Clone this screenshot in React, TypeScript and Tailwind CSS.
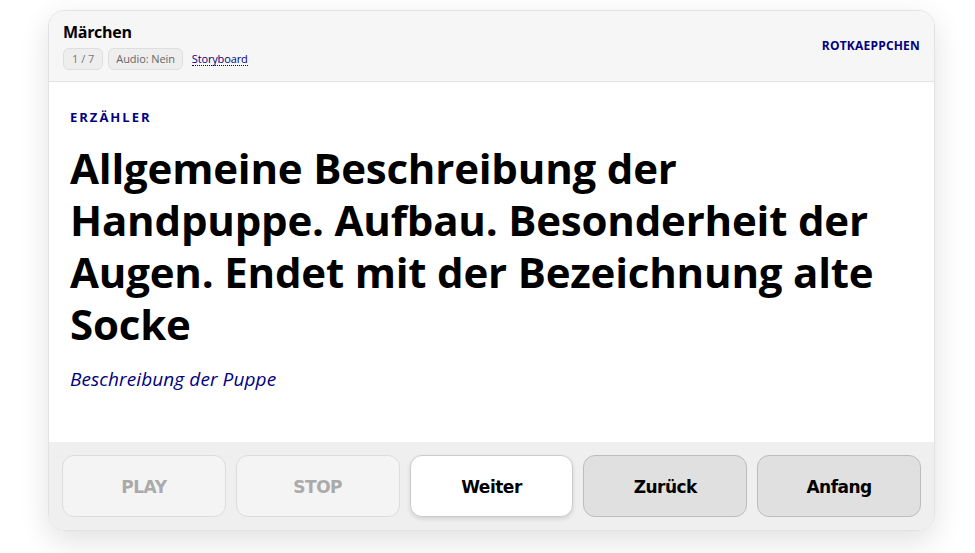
import React from "react";

const seg = { fontFamily: '"Open Sans", "Noto Sans", sans-serif' };

export default function App() {
  return (
    <div className="w-[975px] h-[553px] bg-white pt-[10px] pl-[48px]" style={seg}>
      <div className="w-[887px] rounded-[16px] border border-[#e2e2e2] overflow-hidden shadow-[0_10px_30px_rgba(0,0,0,0.12)]">
        <div className="h-[71px] bg-[#f6f6f6] border-b border-[#e3e3e3] flex items-center justify-between pl-[14px] pr-[14px]">
          <div className="flex flex-col">
            <div className="text-[16px] font-bold leading-[20px] text-black tracking-[-0.3px]">Märchen</div>
            <div className="flex items-center gap-[5px] mt-[6px]">
              <span className="h-[22px] px-[8px] rounded-[6px] bg-[#eeeeee] border border-[#dedede] text-[11px] text-[#777] flex items-center">1 / 7</span>
              <span className="h-[22px] px-[7px] rounded-[6px] bg-[#eeeeee] border border-[#dedede] text-[11px] text-[#666] flex items-center tracking-[-0.1px]">Audio: Nein</span>
              <span className="ml-[4px] text-[11px] text-[#000080] border-b border-dotted border-[#000080] leading-[13px] tracking-[-0.15px]">Storyboard</span>
            </div>
          </div>
          <div className="text-[12px] font-bold text-[#000080] tracking-[0.2px]">ROTKAEPPCHEN</div>
        </div>
        <div className="bg-white pl-[21px] pr-[21px] pt-[26px] h-[360px]">
          <div className="text-[13px] font-bold tracking-[2px] text-[#000080] leading-[18px]">ERZÄHLER</div>
          <h1 className="mt-[16px] text-[42px] font-bold leading-[52px] text-black tracking-[-0.2px]">
            Allgemeine Beschreibung der Handpuppe. Aufbau. Besonderheit der Augen. Endet mit der Bezeichnung alte Socke
          </h1>
          <div className="mt-[17px] text-[19px] italic text-[#000080] leading-[24px] tracking-[0.1px]">Beschreibung der Puppe</div>
        </div>
        <div className="bg-[#efefef] p-[13px] flex gap-[10px]" style={{ fontFamily: '"DejaVu Sans", Verdana, sans-serif' }}>
          <button className="w-[165px] h-[62px] pt-[3px] rounded-[12px] bg-[#f4f4f4] border border-[#dcdcdc] text-[17px] font-bold text-[#aaaaaa] tracking-[-0.5px]">PLAY</button>
          <button className="w-[165px] h-[62px] pt-[3px] rounded-[12px] bg-[#f4f4f4] border border-[#dcdcdc] text-[17px] font-bold text-[#aaaaaa] tracking-[-0.5px]">STOP</button>
          <button className="w-[165px] h-[62px] pt-[3px] rounded-[12px] bg-white border border-[#cccccc] shadow-[0_2px_4px_rgba(0,0,0,0.12)] text-[17px] font-bold text-black tracking-[-0.5px]">Weiter</button>
          <button className="w-[165px] h-[62px] pt-[3px] rounded-[12px] bg-[#e0e0e0] border border-[#bcbcbc] text-[17px] font-bold text-black tracking-[-0.5px]">Zurück</button>
          <button className="w-[165px] h-[62px] pt-[3px] rounded-[12px] bg-[#e0e0e0] border border-[#bcbcbc] text-[17px] font-bold text-black tracking-[-0.5px]">Anfang</button>
        </div>
      </div>
    </div>
  );
}
